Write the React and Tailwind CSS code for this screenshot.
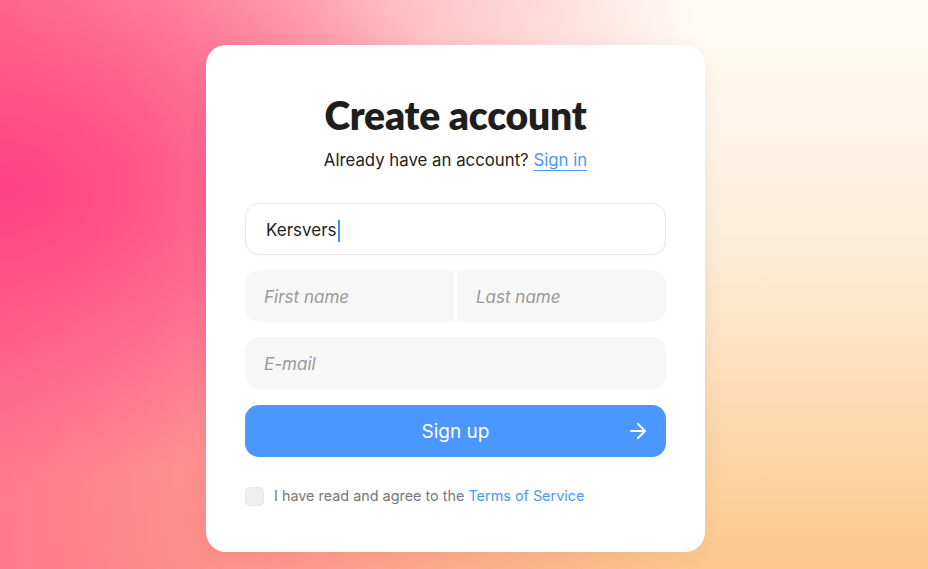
import React from "react";
import { ArrowRight } from "lucide-react";

export default function App() {
  return (
    <div className="w-[928px] h-[569px] overflow-hidden flex items-start justify-start pl-[206px] pt-[45px] bg-[radial-gradient(700px_420px_at_0%_33%,rgba(255,64,132,1)_0%,rgba(255,64,132,0)_70%),linear-gradient(to_right,rgba(255,122,140,1)_0%,rgba(255,130,140,0.7)_30%,rgba(255,140,140,0)_75%),linear-gradient(to_bottom,#fffcf8_0%,#fdecd6_45%,#fdc88b_100%)] font-['Inter',sans-serif]">
      <div className="w-[499px] h-[507px] bg-white rounded-[20px] shadow-[0_4px_20px_rgba(0,0,0,0.06)] px-[39px] pt-[48px] flex flex-col">
        <h1 className="text-center font-['Lato',sans-serif] font-extrabold text-[39px] leading-[44px] text-[#1e1e1e] tracking-[-0.2px]">
          Create account
        </h1>
        <p className="mt-[11px] text-center text-[16.8px] leading-[24px] text-[#222]">
          Already have an account?{" "}
          <a className="text-[#4a98f5] underline underline-offset-[4px] decoration-[1px]">Sign in</a>
        </p>

        <div className="mt-[31px] h-[52px] rounded-[14px] border border-[#e8e8e8] bg-white flex items-center pl-[20px] pt-[3px] shadow-[0_1px_3px_rgba(0,0,0,0.03)]">
          <span className="text-[17px] text-[#1e1e1e]">Kersvers</span>
          <span className="w-[2px] h-[22px] bg-[#3b8cf5] ml-[1px]" />
        </div>

        <div className="mt-[15px] h-[52px] flex gap-[3px]">
          <div className="flex-1 bg-[#f7f7f7] rounded-l-[14px] flex items-center pl-[19px] pt-[3px]">
            <span className="text-[17px] italic text-[#9a9a9a]">First name</span>
          </div>
          <div className="flex-1 bg-[#f7f7f7] rounded-r-[14px] flex items-center pl-[19px] pt-[3px]">
            <span className="text-[17px] italic text-[#9a9a9a]">Last name</span>
          </div>
        </div>

        <div className="mt-[15px] h-[52px] bg-[#f7f7f7] rounded-[14px] flex items-center pl-[19px] pt-[3px]">
          <span className="text-[17px] italic text-[#9a9a9a]">E-mail</span>
        </div>

        <button className="mt-[16px] h-[52px] bg-[#4a98ff] rounded-[14px] relative flex items-center justify-center pt-[2px] text-white text-[19px]">
          Sign up
          <ArrowRight className="absolute right-[16px] top-1/2 -translate-y-1/2" size={24} strokeWidth={2} />
        </button>

        <div className="mt-[29px] flex items-center h-[20px]">
          <div className="w-[19px] h-[19px] rounded-[5px] bg-[#efefef] border border-[#e6e6e6]" />
          <span className="ml-[10px] text-[14.4px] text-[#777]">
            I have read and agree to the <span className="text-[#4a98f5]">Terms of Service</span>
          </span>
        </div>
      </div>
    </div>
  );
}
